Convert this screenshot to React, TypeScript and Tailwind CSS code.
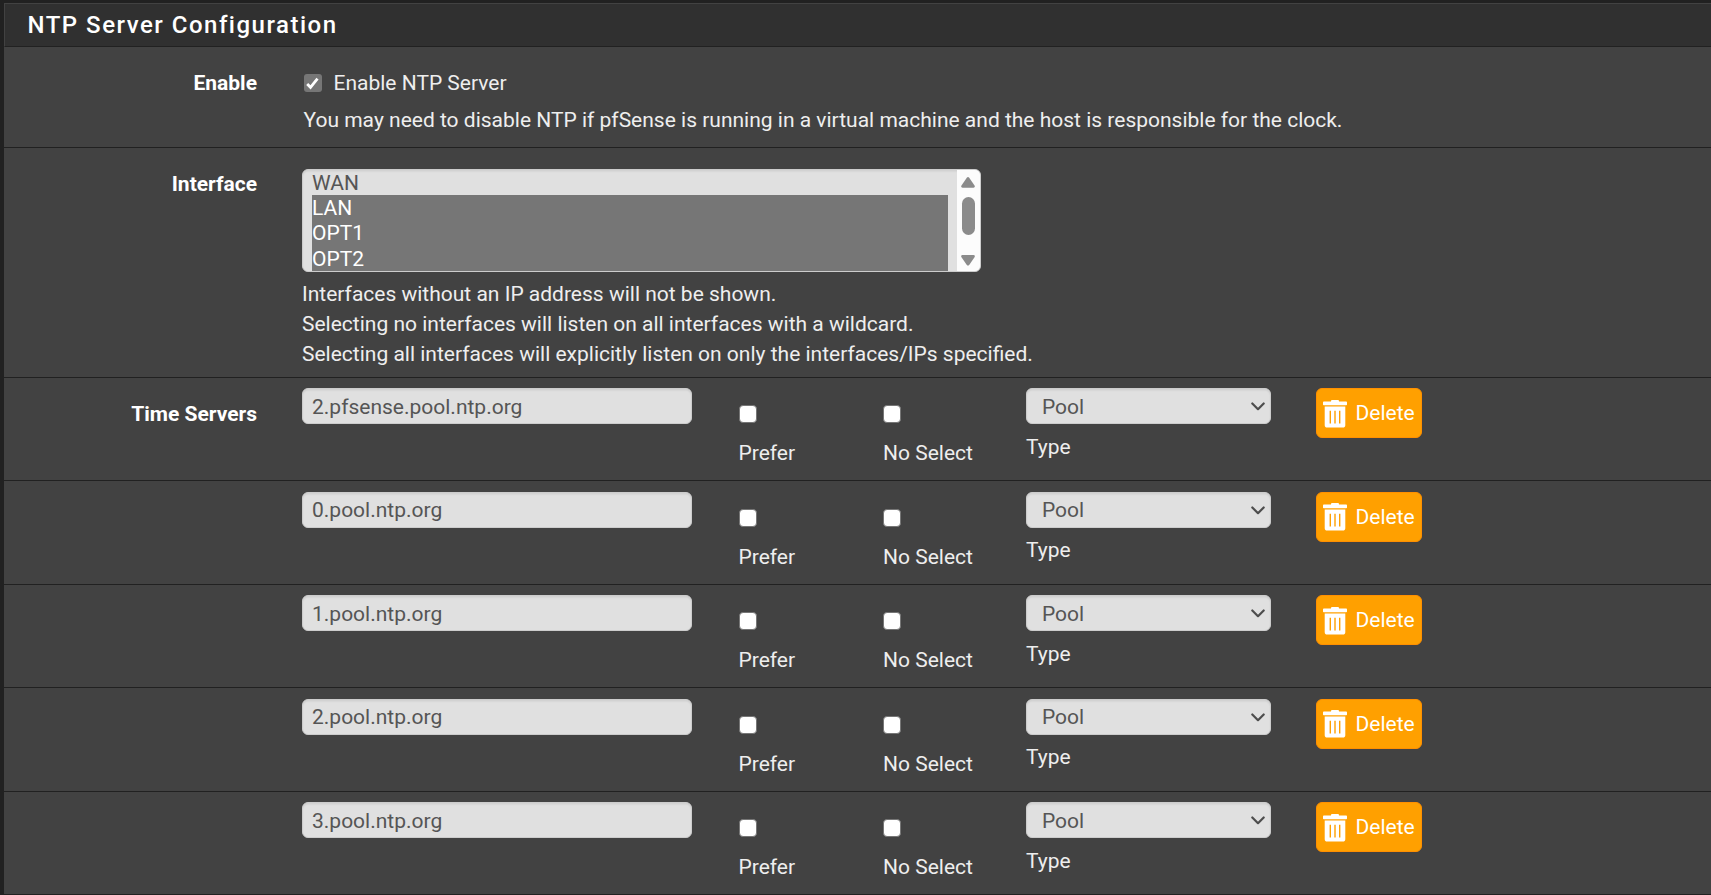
import React from "react";

const servers = [
  "2.pfsense.pool.ntp.org",
  "0.pool.ntp.org",
  "1.pool.ntp.org",
  "2.pool.ntp.org",
  "3.pool.ntp.org",
];

function TrashIcon() {
  return (
    <svg width="24" height="28" viewBox="0 0 24 28" fill="#fff" className="mt-px shrink-0">
      <path d="M8 1.600V1.200C8 .5 8.500 0 9.200 0h5.600C15.500 0 16 .5 16 1.200v.4h7.200c.5 0 .8.400.8.900V4.500c0 .5-.3.800-.8.800H.8C.3 5.300 0 5 0 4.500V2.500c0-.5.300-.9.800-.9z" />
      <path
        fillRule="evenodd"
        d="M1.700 6.500h20.600v18.700c0 1.500-1 2.300-2.300 2.300H4c-1.300 0-2.300-.8-2.300-2.300zM6.600 10.800v12.700h1.400V10.800zM11.300 10.800v12.700h1.400V10.800zM16 10.800v12.700h1.400V10.800z"
      />
    </svg>
  );
}

function Chevron() {
  return (
    <svg
      width="14"
      height="9"
      viewBox="0 0 14 9"
      fill="none"
      stroke="#4d4d4d"
      strokeWidth="2.200"
      strokeLinecap="round"
      strokeLinejoin="round"
    >
      <path d="M1.300 1.500L7 7.200l5.700-5.700" />
    </svg>
  );
}

function Checkbox() {
  return <span className="block size-[18px] rounded-[4px] border-[1.5px] border-[#767676] bg-white" />;
}

const field =
  "flex h-9 items-center rounded-[6px] border border-[#ccc] bg-[#e0e0e0] pt-px text-[#555] shadow-[inset_0_1.5px_1.5px_rgba(0,0,0,0.075)]";

function ServerRow({ host, first }: { host: string; first: boolean }) {
  return (
    <div className="flex h-[103.5px] shrink-0 items-start border-b border-[#212121] pt-[10.5px]">
      <div className="mt-[11px] w-[253px] text-right font-bold text-white">{first ? "Time Servers" : ""}</div>
      <div className={`${field} ml-[45px] w-[390px] px-[9px]`}>{host}</div>
      <div className="ml-[46.5px] w-[144.5px] pt-[17px]">
        <Checkbox />
        <div className="mt-[15px]">Prefer</div>
      </div>
      <div className="w-[143px] pt-[17px]">
        <Checkbox />
        <div className="mt-[15px]">No Select</div>
      </div>
      <div className="w-[245px]">
        <div className={`${field} justify-between pl-[15px] pr-[5px]`}>
          <span>Pool</span>
          <Chevron />
        </div>
        <div className="mt-[7.5px]">Type</div>
      </div>
      <button className="ml-[45px] flex h-[50px] w-[106px] items-center rounded-[6px] border border-[#ff8f00] bg-[#ffa000] pl-[5.5px] text-white">
        <TrashIcon />
        <span className="ml-[9px]">Delete</span>
      </button>
    </div>
  );
}

export default function App() {
  return (
    <div className="h-[895px] w-[1711px] overflow-hidden bg-[#212121] pl-1 pt-[3px] font-['Roboto',sans-serif] text-[21px] leading-[30px] text-[#eee]">
      <div className="flex h-[892px] flex-col bg-[#424242]">
        <div className="flex h-11 shrink-0 items-center border-b border-l border-t border-b-[#212121] border-l-[#424242] border-t-[#424242] bg-[#303030] pl-[22.5px]">
          <h2 className="text-[24px] font-medium tracking-[1.5px] text-white">NTP Server Configuration</h2>
        </div>
        <div className="flex h-[101px] shrink-0 border-b border-[#212121] pt-[21px]">
          <div className="w-[253px] text-right font-bold text-white">Enable</div>
          <div className="ml-[46.5px]">
            <div className="flex items-center">
              <span className="flex size-[18px] items-center justify-center rounded-[3px] bg-[#767676]">
                <svg width="13" height="13" viewBox="0 0 13 13" fill="none" stroke="#fff" strokeWidth="2.800">
                  <path d="M1.200 7l3.300 3.300L11.500 1.600" />
                </svg>
              </span>
              <span className="ml-[12px]">Enable NTP Server</span>
            </div>
            <p className="mt-[7px]">
              You may need to disable NTP if pfSense is running in a virtual machine and the host is responsible for the
              clock.
            </p>
          </div>
        </div>
        <div className="flex h-[229.500px] shrink-0 border-b border-[#212121] pt-[21px]">
          <div className="w-[253px] text-right font-bold text-white">Interface</div>
          <div className="ml-[45px]">
            <div className="flex h-[103px] w-[679px] overflow-hidden rounded-[6px] border border-[#ccc] bg-[#e0e0e0] leading-[25.300px] shadow-[inset_0_1.5px_1.5px_rgba(0,0,0,0.075)]">
              <div className="ml-[9px] w-[636px]">
                <div className="h-[25px] pt-px text-[#555]">WAN</div>
                <div className="h-[76px] bg-[#767676] pt-px text-white">
                  <div>LAN</div>
                  <div>OPT1</div>
                  <div>OPT2</div>
                </div>
              </div>
              <div className="ml-[9px] flex w-[23px] flex-col items-center bg-[#fcfcfc] pt-[7px]">
                <svg width="14" height="11" viewBox="0 0 14 11" fill="#8b8b8b" className="mr-px">
                  <path d="M5.800.8Q7-.6 8.200.8L13.700 8.700Q14.300 10.500 12.500 10.700H1.500Q-.3 10.500.3 8.700z" />
                </svg>
                <div className="mr-px mt-[9px] h-[38px] w-[13px] rounded-full bg-[#8b8b8b]" />
                <svg className="mr-px mt-[20px]" width="14" height="11" viewBox="0 0 14 11" fill="#8b8b8b">
                  <path d="M5.800 9.900Q7 11.300 8.200 9.900L13.700 2Q14.300.2 12.500 0H1.500Q-.3.200.3 2z" />
                </svg>
              </div>
            </div>
            <div className="mt-[7px]">
              <p>Interfaces without an IP address will not be shown.</p>
              <p>Selecting no interfaces will listen on all interfaces with a wildcard.</p>
              <p>Selecting all interfaces will explicitly listen on only the interfaces/IPs specified.</p>
            </div>
          </div>
        </div>
        {servers.map((s, i) => (
          <ServerRow key={s} host={s} first={i === 0} />
        ))}
      </div>
    </div>
  );
}
